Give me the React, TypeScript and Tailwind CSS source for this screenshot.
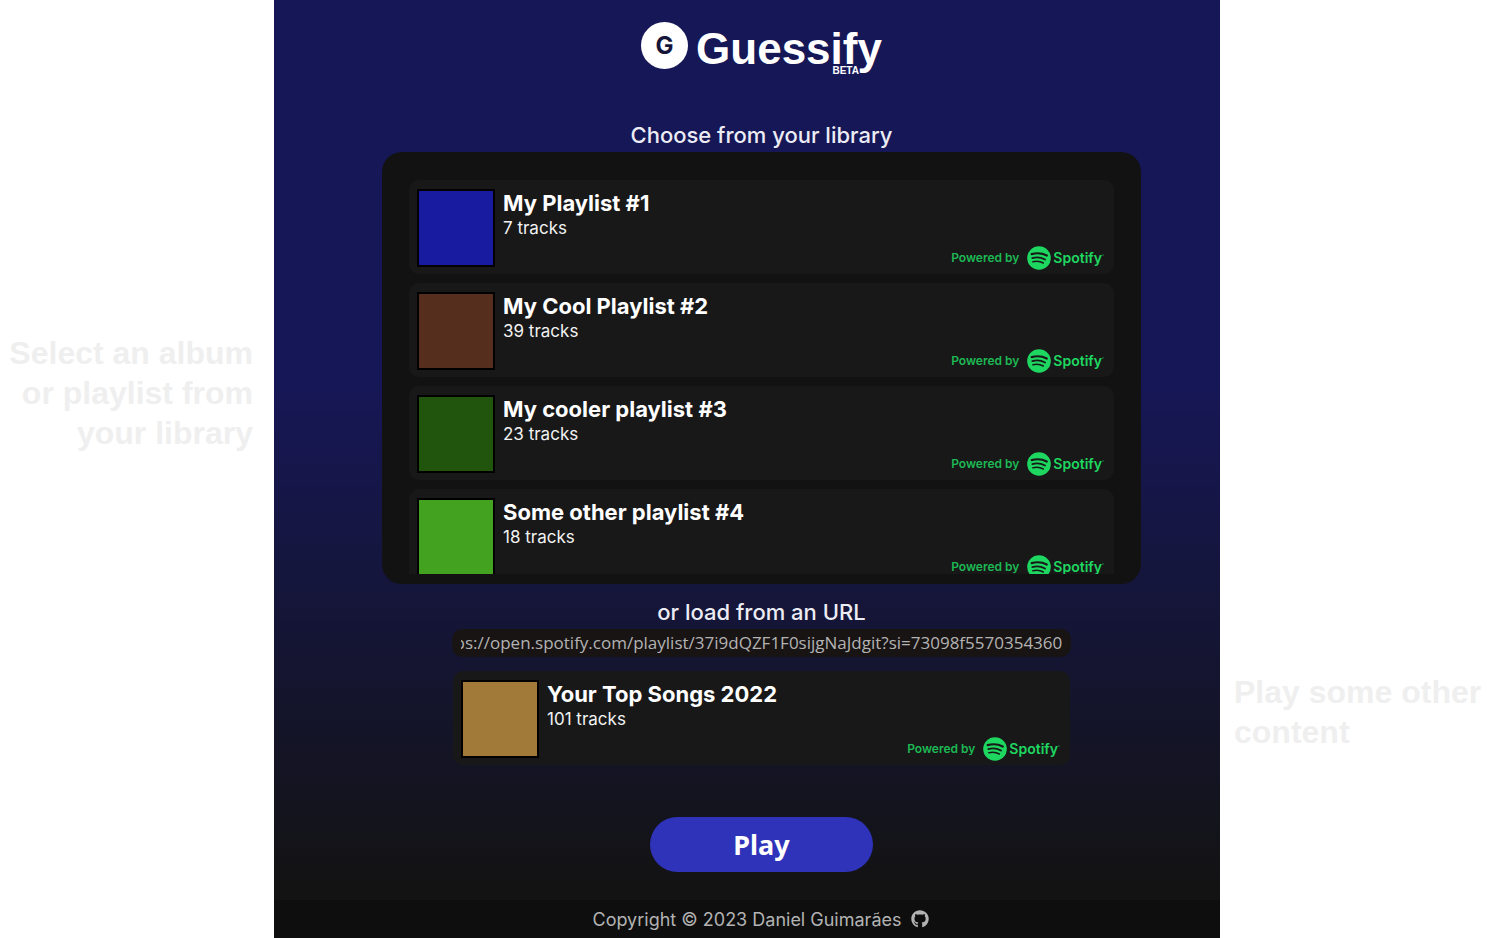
import { useEffect, useRef, useState } from "react";
import { FaGithub } from "react-icons/fa";

type Playlist = { name: string; tracks: number; cover: string };

const library: Playlist[] = [
  { name: "My Playlist #1", tracks: 7, cover: "bg-[#181ba0]" },
  { name: "My Cool Playlist #2", tracks: 39, cover: "bg-[#552e1d]" },
  { name: "My cooler playlist #3", tracks: 23, cover: "bg-[#21550d]" },
  { name: "Some other playlist #4", tracks: 18, cover: "bg-[#44a221]" },
];

const loaded: Playlist = { name: "Your Top Songs 2022", tracks: 101, cover: "bg-[#a17938]" };

function SpotifyMark() {
  return (
    <svg viewBox="0 0 24 24" className="size-6" aria-hidden="true">
      <circle cx="12" cy="12" r="11.8" fill="#1ed760" />
      <g fill="none" stroke="#181818" strokeLinecap="round">
        <path d="M4.7 8.1c5-1.4 10.700-.9 15.100 1.400" strokeWidth="2.200" />
        <path d="M5.300 12.100c4.200-1.200 8.900-.7 12.700 1.400" strokeWidth="1.900" />
        <path d="M5.900 15.700c3.500-.9 7.200-.6 10.400 1.300" strokeWidth="1.500" />
      </g>
    </svg>
  );
}

function PoweredBy() {
  return (
    <span className="-mb-1 flex items-center gap-2 self-end pr-[2px] text-[#1ed760]">
      <span className="text-[12px] leading-4 font-semibold text-[#1db954]">Powered by</span>
      <span className="flex items-center gap-[2px]">
        <SpotifyMark />
        <span className="flex text-[14px] leading-6 font-semibold">
          Spotify
          <svg viewBox="0 0 2 24" className="h-6 w-[2px]" aria-hidden="true">
            <circle cx="1" cy="9" r="0.8" fill="#1ed760" opacity="0.6" />
          </svg>
        </span>
      </span>
    </span>
  );
}

function PlaylistCard({ playlist }: { playlist: Playlist }) {
  return (
    <button
      type="button"
      className="flex h-[94px] w-full shrink-0 rounded-[10px] bg-[#181818] px-2 pt-[9px] pb-2 text-left text-white"
    >
      <span className={`size-[78px] shrink-0 border-2 border-black ${playlist.cover}`} />
      <span className="flex min-w-0 flex-1 flex-col pl-2">
        <span className="text-[22px] leading-7 font-bold">{playlist.name}</span>
        <span className="text-[17px] leading-[22px] text-[#f2f2f2]">{playlist.tracks} tracks</span>
      </span>
      <PoweredBy />
    </button>
  );
}

function Logo() {
  return (
    <header className="flex h-[94px] items-start justify-center gap-2 pt-[22px]">
      <span className="flex size-[47px] items-center justify-center rounded-full bg-white text-[24px] font-bold text-[#15153a]">
        G
      </span>
      <h1 className="relative font-['Liberation_Sans',sans-serif] text-[44px] leading-[54px] font-bold text-white">
        Guessify
        <span className="absolute right-[23px] bottom-[-1px] text-[10px] leading-3">BETA</span>
      </h1>
    </header>
  );
}

export default function App() {
  const [url, setUrl] = useState(
    "https://open.spotify.com/playlist/37i9dQZF1F0sijgNaJdgit?si=73098f5570354360",
  );
  const field = useRef<HTMLInputElement>(null);

  useEffect(() => {
    if (field.current) field.current.scrollLeft = field.current.scrollWidth;
  }, []);

  return (
    <div className="grid min-h-screen grid-cols-[274px_minmax(0,1fr)_267px] bg-white font-['Inter',sans-serif]">
      <aside className="pt-[333px] pr-[21px] text-right font-['Liberation_Sans',sans-serif] text-[32px] leading-10 font-bold text-[#efefef]">
        Select an album or playlist from your library
      </aside>

      <div className="flex flex-col bg-linear-to-b/srgb from-[#161757] from-40% to-[#131313] to-95%">
        <main className="flex flex-1 flex-col pr-[79px] pl-[108px]">
          <Logo />
          <h2 className="pt-6 text-center text-[22px] leading-[34px] font-medium text-[#ececf4]">
            Choose from your library
          </h2>
          <section className="h-[432px] rounded-[20px] bg-[#121212] px-[27px] pt-7 pb-[10px]">
            <div className="flex h-full flex-col gap-[9px] overflow-hidden">
              {library.map((p) => (
                <PlaylistCard key={p.name} playlist={p} />
              ))}
            </div>
          </section>

          <div className="flex flex-col px-[70px]">
            <label
              htmlFor="playlist-url"
              className="pt-[11px] text-center text-[22px] leading-[34px] font-medium text-[#ececf4]"
            >
              or load from an URL
            </label>
            <input
              ref={field}
              id="playlist-url"
              type="text"
              value={url}
              onChange={(e) => setUrl(e.target.value)}
              className="h-7 w-full rounded-[10px] bg-[#191414] px-[9px] pb-[2px] font-['Open_Sans',sans-serif] text-[17px] text-[#b3b3b3] outline-none"
            />
            <div className="px-px pt-[14px]">
              <PlaylistCard playlist={loaded} />
            </div>
          </div>

          <button
            type="button"
            className="mx-auto mt-[52px] mb-7 h-[55px] w-[223px] rounded-full bg-[#2f33b9] pt-[2px] font-['Noto_Sans',sans-serif] text-[27px] font-bold text-white"
          >
            Play
          </button>
        </main>

        <footer className="flex h-[38px] items-center justify-center gap-[10px] bg-[#0e0e0e] pl-7 text-[18px] text-[#b3b3b3]">
          <span>Copyright © 2023 Daniel Guimarães</span>
          <a href="https://github.com" aria-label="GitHub">
            <FaGithub className="size-[18px]" />
          </a>
        </footer>
      </div>

      <aside className="pt-[672px] pl-[14px] font-['Liberation_Sans',sans-serif] text-[32px] leading-10 font-bold text-[#efefef]">
        Play some other content
      </aside>
    </div>
  );
}
